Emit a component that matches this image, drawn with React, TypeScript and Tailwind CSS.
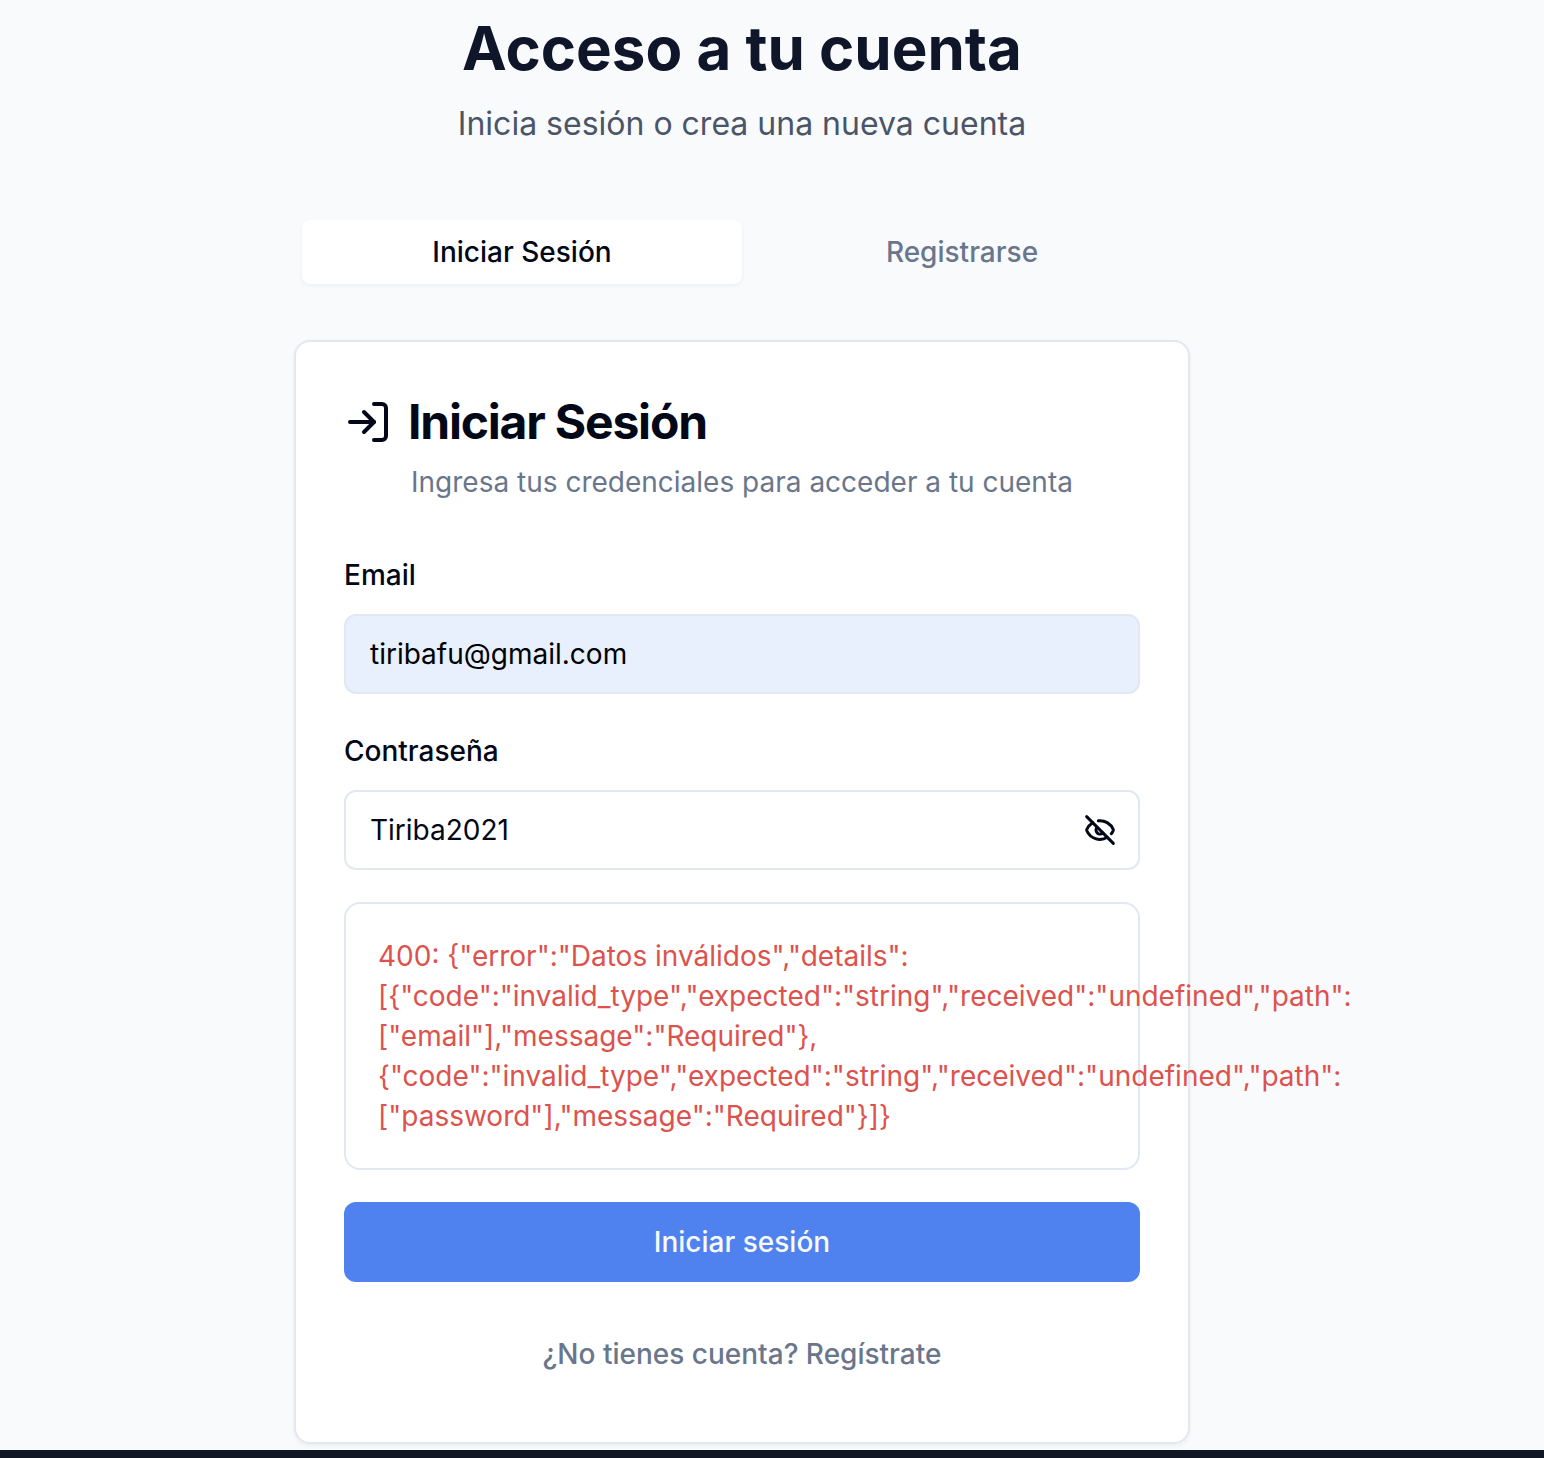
import { LogIn, EyeOff } from "lucide-react";

export default function App() {
  return (
    <div className="flex h-[1458px] flex-col overflow-hidden bg-[#f9fafc] font-['Inter',sans-serif] text-[#020817]">
      <main className="ml-[294px] flex h-[1450px] w-[896px] flex-col">
        <header className="pt-[12px] text-center">
          <h1 className="text-[60px] font-bold leading-[72px] text-[#101629]">Acceso a tu cuenta</h1>
          <p className="mt-[12px] text-[32px] leading-[56px] text-[#4a5568]">Inicia sesión o crea una nueva cuenta</p>
        </header>
        <div className="mt-[60px] grid h-[80px] grid-cols-2 p-2 text-[28px] font-medium leading-[40px]">
          <button className="h-16 rounded-lg bg-white text-[#020817] shadow-[0_2px_4px_rgba(0,0,0,0.05)]">Iniciar Sesión</button>
          <button className="h-16 text-[#69768c]">Registrarse</button>
        </div>
        <section className="mt-[48px] h-[1104px] shrink-0 rounded-2xl border-2 border-[#e2e8f0] bg-white px-12 pt-12 shadow-[0_2px_4px_rgba(0,0,0,0.05)]">
          <h2 className="flex h-16 items-center gap-4 text-[48px] font-bold leading-[64px] tracking-[-1.2px]">
            <LogIn className="size-12" strokeWidth={2} />
            Iniciar Sesión
          </h2>
          <p className="mt-2 text-center text-[28px] leading-[40px] text-[#69768c]">Ingresa tus credenciales para acceder a tu cuenta</p>
          <label className="mt-[59px] block text-[28px] font-medium leading-[28px]">Email</label>
          <div className="mt-[25px] flex h-20 items-center rounded-xl border-2 border-[#e2e8f0] bg-[#e8effd] px-6 text-[28px] text-black">tiribafu@gmail.com</div>
          <label className="mt-[43px] block text-[28px] font-medium leading-[28px]">Contraseña</label>
          <div className="mt-[25px] flex h-20 items-center justify-between rounded-xl border-2 border-[#e2e8f0] pl-6 pr-[22px] text-[28px]">
            Tiriba2021
            <EyeOff className="size-8" strokeWidth={2.25} />
          </div>
          <div className="mt-8 h-[268px] rounded-2xl border-2 border-[#e2e8f0] px-8 pt-8 text-[28px] leading-[40px] text-[#dd524c]">
            <p className="whitespace-nowrap">
              400: {'{"error":"Datos inválidos","details":'}<br />
              {'[{"code":"invalid_type","expected":"string","received":"undefined","path":'}<br />
              {'["email"],"message":"Required"},'}<br />
              {'{"code":"invalid_type","expected":"string","received":"undefined","path":'}<br />
              {'["password"],"message":"Required"}]}'}
            </p>
          </div>
          <button className="mt-8 block h-20 w-full rounded-xl bg-[#4f82ee] text-[28px] font-medium text-[#f8fafc]">Iniciar sesión</button>
          <button className="mt-[52px] block w-full text-center text-[28px] font-medium leading-[40px] text-[#69768c]">¿No tienes cuenta? Regístrate</button>
        </section>
      </main>
      <footer className="h-2 bg-[#101624]" />
    </div>
  );
}
